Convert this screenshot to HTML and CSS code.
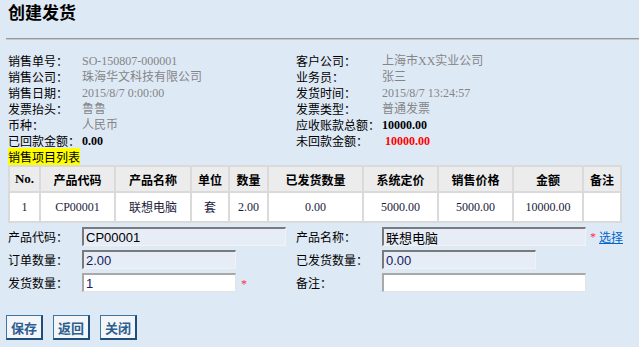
FILE: index.html
```html
<!DOCTYPE html>
<html lang="zh-CN">
  <head>
    <meta charset="UTF-8" />
    <title>创建发货</title>
    <link rel="stylesheet" href="styles.css">
  </head>
  <body>
    <h1 class="page-title">创建发货</h1>
    <hr class="title-line" />

    <div class="info">
      <span class="label">销售单号：</span><span class="value">SO-150807-000001</span>
      <span class="label">客户公司：</span><span class="value">上海市XX实业公司</span>

      <span class="label">销售公司：</span><span class="value">珠海华文科技有限公司</span>
      <span class="label">业务员：</span><span class="value">张三</span>

      <span class="label">销售日期：</span><span class="value">2015/8/7 0:00:00</span>
      <span class="label">发货时间：</span><span class="value">2015/8/7 13:24:57</span>

      <span class="label">发票抬头：</span><span class="value">鲁鲁</span>
      <span class="label">发票类型：</span><span class="value">普通发票</span>

      <span class="label">币种：</span><span class="value">人民币</span>
      <span class="label">应收账款总额：</span><span class="value strong">10000.00</span>

      <span class="label">已回款金额：</span><span class="value strong">0.00</span>
      <span class="label">未回款金额：</span><span class="value strong red">10000.00</span>
    </div>

    <div class="section-title"><span>销售项目列表</span></div>

    <table class="items">
      <colgroup>
        <col style="width: 31px" />
        <col style="width: 75px" />
        <col style="width: 76px" />
        <col style="width: 38px" />
        <col style="width: 39px" />
        <col style="width: 95px" />
        <col style="width: 75px" />
        <col style="width: 75px" />
        <col style="width: 70px" />
        <col />
      </colgroup>
      <thead>
        <tr>
          <th class="latin">No.</th>
          <th>产品代码</th>
          <th>产品名称</th>
          <th>单位</th>
          <th>数量</th>
          <th>已发货数量</th>
          <th>系统定价</th>
          <th>销售价格</th>
          <th>金额</th>
          <th>备注</th>
        </tr>
      </thead>
      <tbody>
        <tr>
          <td>1</td>
          <td>CP00001</td>
          <td>联想电脑</td>
          <td>套</td>
          <td>2.00</td>
          <td>0.00</td>
          <td>5000.00</td>
          <td>5000.00</td>
          <td>10000.00</td>
          <td></td>
        </tr>
      </tbody>
    </table>

    <div class="form">
      <span class="label">产品代码：</span>
      <div class="field"><input class="input wide readonly" value="CP00001" readonly /></div>
      <span class="label">产品名称：</span>
      <div class="field">
        <input class="input wide readonly" value="联想电脑" readonly />
        <span class="star top">*</span>
        <a class="pick" href="#">选择</a>
      </div>

      <span class="label">订单数量：</span>
      <div class="field"><input class="input short readonly num" value="2.00" readonly /></div>
      <span class="label">已发货数量：</span>
      <div class="field"><input class="input short readonly num" value="0.00" readonly /></div>

      <span class="label">发货数量：</span>
      <div class="field"><input class="input short num" value="1" /><span class="star">*</span></div>
      <span class="label">备注：</span>
      <div class="field"><input class="input wide" value="" /></div>
    </div>

    <div class="buttons">
      <button class="btn">保存</button>
      <button class="btn">返回</button>
      <button class="btn">关闭</button>
    </div>
  </body>
</html>
```

FILE: styles.css
```css
* {
  box-sizing: border-box;
}

body {
  margin: 0;
  background: #dee9f6;
  font-family: "Noto Sans CJK SC", "Liberation Sans", sans-serif;
  font-size: 12px;
  color: #000;
}

.page-title {
  margin: 0;
  padding-left: 8px;
  font-size: 17px;
  line-height: 24px;
  font-weight: bold;
}

.title-line {
  margin: 14px 0 13px 6px;
  border: none;
  border-top: 1px solid #9a9a9a;
  border-bottom: 1px solid #c4c8cc;
  height: 2px;
}

.info {
  display: grid;
  grid-template-columns: 74px 214px 86px 1fr;
  padding-left: 8px;
  line-height: 16px;
}

.info .label {
  white-space: nowrap;
}

.info .value {
  color: #858585;
  font-family: "Liberation Serif", "Noto Sans CJK SC", serif;
  font-size: 12px;
  white-space: nowrap;
}

.info .strong {
  color: #000;
  font-weight: bold;
}

.info .red {
  color: #ff0000;
  padding-left: 3px;
}

.section-title {
  padding-left: 8px;
  line-height: 16px;
}

.section-title span {
  background: #ffff00;
}

.items {
  margin-left: 8px;
  width: 614px;
  border-collapse: collapse;
  table-layout: fixed;
  border-right: 2px solid #a8a8a8;
}

.items th,
.items td {
  border: 2px solid #dadada;
  text-align: center;
  padding: 0;
  white-space: nowrap;
}

.items th {
  height: 26px;
  background: #ececec;
  font-weight: bold;
}

.items th.latin {
  font-family: "Liberation Serif", serif;
  font-size: 13px;
}

.items td {
  height: 30px;
  background: #fff;
  font-family: "Liberation Serif", "Noto Sans CJK SC", serif;
  font-size: 12px;
  color: #1c1c3c;
}

.form {
  display: grid;
  grid-template-columns: 74px 214px 86px 1fr;
  row-gap: 4px;
  margin-top: 4px;
  padding-left: 8px;
}

.form .label {
  line-height: 19px;
  white-space: nowrap;
}

.field {
  display: flex;
  align-items: center;
  white-space: nowrap;
}

.input {
  height: 19px;
  padding: 0 2px;
  margin: 0;
  font-family: "Liberation Sans", "Noto Sans CJK SC", sans-serif;
  font-size: 13px;
  color: #000;
  background: #fff;
  border-style: solid;
  border-width: 2px 1px 1px 2px;
  border-color: #a9a9a9 #e4e4e4 #e4e4e4 #a9a9a9;
}

.input.readonly {
  background: #e6edf7;
  border-color: #7a7a7a #f2f2f2 #f2f2f2 #7a7a7a;
}

.input.num {
  color: #15205a;
}

.input.wide {
  width: 204px;
}

.input.short {
  width: 154px;
}

.star {
  color: #ff2a55;
  font-family: "Liberation Serif", serif;
  font-size: 12px;
  margin-left: 5px;
  line-height: 12px;
  padding-top: 3px;
}

.star.top {
  padding-top: 0;
  margin-left: 4px;
}

.pick {
  color: #0066cc;
  margin-left: 3px;
  text-decoration: underline;
}

.buttons {
  display: flex;
  gap: 10px;
  margin: 23px 0 0 6px;
}

.btn {
  width: 37px;
  height: 25px;
  padding: 0;
  background: #f3f5f8;
  color: #2c5e90;
  font-family: "Noto Sans CJK SC", sans-serif;
  font-size: 13px;
  font-weight: bold;
  border-style: solid;
  border-width: 1px 2px 2px 1px;
  border-color: #3a77a8 #1d4f7a #1d4f7a #3a77a8;
  cursor: pointer;
}
```
